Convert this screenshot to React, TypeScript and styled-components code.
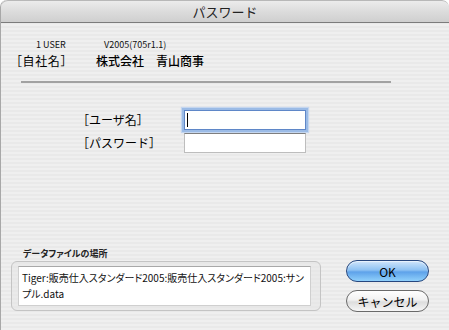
import React from 'react';
import styled, { createGlobalStyle, css } from 'styled-components';

const GlobalStyle = createGlobalStyle`
  html, body {
    margin: 0;
    padding: 0;
    background: #ffffff;
  }
  body {
    font-family: 'Noto Sans CJK JP', 'DejaVu Sans', sans-serif;
    color: #000;
  }
`;

const Window = styled.div`
  width: 449px;
  height: 330px;
  display: flex;
  flex-direction: column;
  box-sizing: border-box;
  border-left: 1px solid #a8a8a8;
  border-radius: 7px 7px 0 0;
  overflow: hidden;
  background: repeating-linear-gradient(
    to bottom,
    #efefef 0px,
    #efefef 2px,
    #e9e9e9 2px,
    #e9e9e9 4px
  );
`;

const TitleBar = styled.div`
  height: 23px;
  flex-shrink: 0;
  display: flex;
  align-items: center;
  justify-content: center;
  box-sizing: border-box;
  border-top: 1px solid #b8b8b8;
  border-bottom: 1px solid #7c7c7c;
  border-radius: 7px 7px 0 0;
  background: linear-gradient(to bottom, #ececec 0%, #dcdcdc 50%, #cfcfcf 100%);
  font-size: 13px;
  color: #222;
`;

const Body = styled.div`
  flex: 1;
  display: flex;
  flex-direction: column;
  padding-bottom: 19px;
`;

const InfoRow = styled.div`
  display: flex;
  margin-top: 16px;
  padding-left: 35px;
  font-size: 9px;
  line-height: 12px;
  color: #111;
`;

const InfoItem = styled.span<{ $width?: number }>`
  width: ${(p) => (p.$width ? `${p.$width}px` : 'auto')};
`;

const CompanyRow = styled.div`
  display: flex;
  margin-top: 2px;
  padding-left: 9px;
  font-size: 12px;
  line-height: 16px;
`;

const CompanyLabel = styled.span`
  width: 86px;
  letter-spacing: 0.6px;
`;

const CompanyName = styled.span`
  font-weight: 500;
  white-space: pre;
`;

const Separator = styled.div`
  margin: 12px 0 0 20px;
  width: 370px;
  height: 2px;
  background: #a2a2a2;
`;

const Form = styled.div`
  margin: 27px 0 0 76px;
  display: grid;
  grid-template-columns: 107px 122px;
  row-gap: 3px;
  align-items: center;
`;

const FieldLabel = styled.span`
  font-size: 12px;
  line-height: 20px;
`;

const Field = styled.div<{ $focused?: boolean }>`
  position: relative;
  height: 20px;
  box-sizing: border-box;
  background: #fff;
  border: 1px solid #bdbdbd;
  border-top-color: #7e7e7e;
  ${(p) =>
    p.$focused &&
    css`
      border: 1px solid #5f87c8;
      box-shadow: 0 0 0 2px #9bbbe6, 0 0 1px 3px #c4d6ef;
      &::after {
        content: '';
        position: absolute;
        left: 2px;
        top: 2px;
        width: 1px;
        height: 14px;
        background: #000;
      }
    `}
`;

const Bottom = styled.div`
  margin-top: auto;
  display: flex;
  align-items: flex-end;
  padding-left: 10px;
`;

const FileGroup = styled.div`
  width: 310px;
  display: flex;
  flex-direction: column;
`;

const GroupLabel = styled.span`
  margin-left: 12px;
  font-size: 9px;
  font-weight: 700;
  line-height: 12px;
  color: #222;
  font-feature-settings: 'palt';
`;

const GroupBox = styled.div`
  margin-top: 1px;
  height: 50px;
  box-sizing: border-box;
  border: 1px solid #c4c4c4;
  border-radius: 6px;
  padding: 4px 9px 4px 6px;
  background: rgba(230, 230, 230, 0.5);
`;

const PathField = styled.div`
  height: 100%;
  box-sizing: border-box;
  background: #fff;
  border: 1px solid #cfcfcf;
  border-top-color: #a8a8a8;
  padding: 3px 2px 1px 3px;
  font-size: 10px;
  line-height: 16px;
  color: #111;
  word-break: break-all;
  font-feature-settings: 'palt';
`;

const Buttons = styled.div`
  margin-left: 25px;
  margin-bottom: -1px;
  display: flex;
  flex-direction: column;
  gap: 8px;
`;

const AquaButton = styled.div<{ $primary?: boolean }>`
  width: 83px;
  height: 22px;
  box-sizing: border-box;
  border-radius: 11px;
  display: flex;
  align-items: center;
  justify-content: center;
  font-size: 12px;
  color: #000;
  ${(p) =>
    p.$primary
      ? css`
          border: 1px solid #27477e;
          background: linear-gradient(
            to bottom,
            #cfe5fb 0%,
            #8ec2f3 45%,
            #5ea2ea 55%,
            #8fd0fb 100%
          );
          box-shadow: inset 0 1px 1px rgba(255, 255, 255, 0.6);
        `
      : css`
          border: 1px solid #6a6a6a;
          background: linear-gradient(
            to bottom,
            #ffffff 0%,
            #f1f1f1 45%,
            #dddddd 55%,
            #f6f6f6 100%
          );
        `}
`;

export default function App() {
  return (
    <>
      <GlobalStyle />
      <Window>
        <TitleBar>パスワード</TitleBar>
        <Body>
          <InfoRow>
            <InfoItem $width={68}>1 USER</InfoItem>
            <InfoItem>V2005(705r1.1)</InfoItem>
          </InfoRow>
          <CompanyRow>
            <CompanyLabel>［自社名］</CompanyLabel>
            <CompanyName>株式会社　青山商事</CompanyName>
          </CompanyRow>
          <Separator />
          <Form>
            <FieldLabel>［ユーザ名］</FieldLabel>
            <Field $focused />
            <FieldLabel>［パスワード］</FieldLabel>
            <Field />
          </Form>
          <Bottom>
            <FileGroup>
              <GroupLabel>データファイルの場所</GroupLabel>
              <GroupBox>
                <PathField>
                  Tiger:販売仕入スタンダード2005:販売仕入スタンダード2005:サンプル.data
                </PathField>
              </GroupBox>
            </FileGroup>
            <Buttons>
              <AquaButton $primary>OK</AquaButton>
              <AquaButton>キャンセル</AquaButton>
            </Buttons>
          </Bottom>
        </Body>
      </Window>
    </>
  );
}
